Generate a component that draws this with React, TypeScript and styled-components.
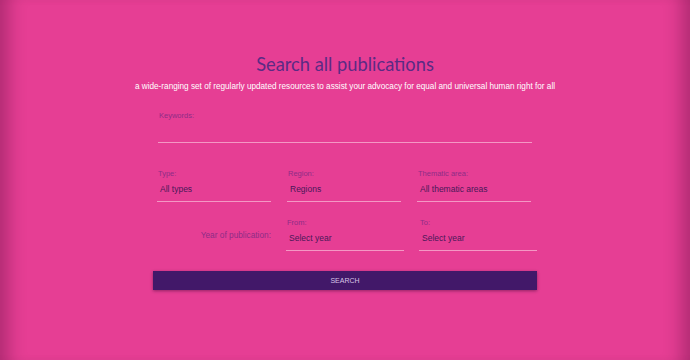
import styled, { createGlobalStyle } from "styled-components"

const GlobalStyle = createGlobalStyle`
    html, body {
        margin: 0;
        padding: 0;
        background: #e63e94;
    }
    * {
        box-sizing: border-box;
    }
`

type FieldProps = {
    label: string,
    value?: string
}

function Field(props: FieldProps) {
    return (
        <StyledField>
            <FieldLabel>{props.label}</FieldLabel>
            <FieldValue>{props.value ?? "\u00a0"}</FieldValue>
        </StyledField>
    )
}

export default function App() {
    return (
        <Page>
            <GlobalStyle />
            <Header>
                <Title>Search all publications</Title>
                <Subtitle>a wide-ranging set of regularly updated resources to assist your advocacy for equal and universal human right for all</Subtitle>
            </Header>
            <Form>
                <KeywordsRow>
                    <Field label="Keywords:" />
                </KeywordsRow>
                <FilterRow>
                    <Field label="Type:" value="All types" />
                    <Field label="Region:" value="Regions" />
                    <Field label="Thematic area:" value="All thematic areas" />
                </FilterRow>
                <YearRow>
                    <YearLabel>Year of publication:</YearLabel>
                    <Field label="From:" value="Select year" />
                    <Field label="To:" value="Select year" />
                </YearRow>
                <SearchButton type="button">SEARCH</SearchButton>
            </Form>
        </Page>
    )
}

const Page = styled.div`
    width: 690px;
    height: 360px;
    background: #e63e94;
    box-shadow: inset 22px 0 18px -14px rgba(60, 0, 40, 0.32),
                inset -22px 0 18px -14px rgba(60, 0, 40, 0.32);
    padding-top: 53px;
    font-family: "Liberation Sans", Arial, sans-serif;
`
const Header = styled.header`
    display: flex;
    flex-direction: column;
    align-items: center;
`
const Title = styled.h1`
    margin: 0;
    font-family: Lato, "Open Sans", sans-serif;
    font-weight: 400;
    font-size: 18.3px;
    line-height: 22px;
    color: #5b2a84;
`
const Subtitle = styled.p`
    margin: 6px 0 0;
    font-size: 8.2px;
    line-height: 12px;
    color: #ffffff;
`
const Form = styled.form`
    width: 384px;
    margin: 18px auto 0;
    display: flex;
    flex-direction: column;
`
const KeywordsRow = styled.div`
    padding: 0 5px;
    & > div {
        height: 32px;
    }
`
const FilterRow = styled.div`
    margin-top: 26px;
    padding: 0 6px 0 4px;
    display: grid;
    grid-template-columns: repeat(3, 1fr);
    gap: 16px;
`
const YearRow = styled.div`
    margin-top: 16px;
    display: grid;
    grid-template-columns: 1fr 118px 118px;
    column-gap: 15px;
`
const YearLabel = styled.span`
    align-self: center;
    justify-self: end;
    font-size: 8.3px;
    color: #8e2d86;
`
const StyledField = styled.div`
    display: flex;
    flex-direction: column;
    border-bottom: 1px solid #f497c4;
`
const FieldLabel = styled.label`
    font-size: 7.5px;
    line-height: 10px;
    color: #8e2d86;
    padding-left: 1px;
`
const FieldValue = styled.span`
    font-size: 8.5px;
    line-height: 12px;
    margin-top: 4px;
    padding: 0 3px 6px;
    color: #4a1858;
`
const SearchButton = styled.button`
    margin-top: 20px;
    height: 19px;
    width: 384px;
    border: none;
    background: #421869;
    color: #d8c4e6;
    font-family: "Liberation Sans", Arial, sans-serif;
    font-size: 7px;
    box-shadow: 0 1px 3px rgba(40, 0, 40, 0.45);
    cursor: pointer;
`
